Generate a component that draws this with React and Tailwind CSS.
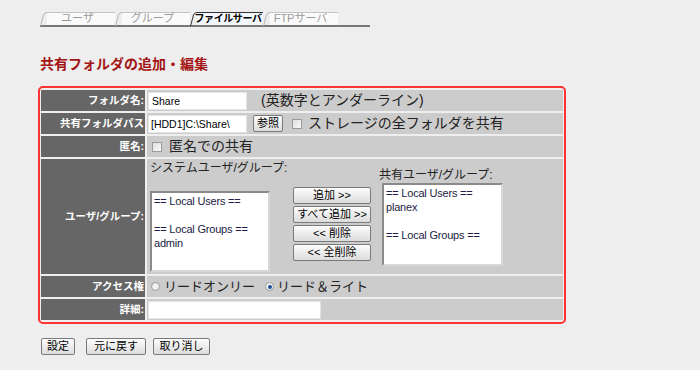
import React from 'react';

const font = "font-['Liberation_Sans','Noto_Sans_CJK_JP',sans-serif]";

function Tab({ label, active }) {
  return (
    <div className={`relative h-[13px] flex items-center justify-center ${active ? 'w-[73px]' : 'w-[75px]'}`}>
      <svg className="absolute left-0 top-0" width="8" height="14" viewBox="0 0 8 14">
        <path d="M0.5 14 L3.5 3 Q4.5 0.5 7 0.5 L8 0.5" fill="none" stroke={active ? '#333' : '#b5b5b5'} strokeWidth="1" />
      </svg>
      <div
        className={`absolute left-[7px] right-0 top-0 bottom-0 border-t ${
          active ? 'border-[#333] bg-[#f4f7fc]' : 'border-[#c4c4c4] bg-[#fafafa]'
        }`}
      ></div>
      <span
        className={`relative leading-none whitespace-nowrap ${
          active ? 'text-[10px] font-bold text-black tracking-[-0.4px] pl-[3px]' : 'text-[11px] text-[#9a9a9a]'
        }`}
      >
        {label}
      </span>
    </div>
  );
}

function Btn({ children, className = '' }) {
  return (
    <button
      type="button"
      className={`h-[17px] border border-[#7a7a7a] rounded-[2px] bg-gradient-to-b from-[#fdfdfd] to-[#dcdcdc] text-[11px] leading-none text-black whitespace-nowrap ${className}`}
    >
      {children}
    </button>
  );
}

function Check() {
  return (
    <span className="inline-block w-[10px] h-[10px] border border-[#9a9a9a] bg-gradient-to-br from-[#dedede] to-[#fafafa] shrink-0"></span>
  );
}

function Radio({ checked }) {
  return (
    <span className="inline-flex items-center justify-center w-[9px] h-[9px] rounded-full border border-[#9a9a9a] bg-[#f0f0f0] shrink-0">
      {checked && <span className="w-[4px] h-[4px] rounded-full bg-[#1f4f9a]"></span>}
    </span>
  );
}

function Label({ children, className = 'h-[21px]' }) {
  return (
    <div className={`bg-[#666] text-white font-bold text-[10.5px] flex items-center justify-end pr-px ${className}`}>
      {children}
    </div>
  );
}

function ListBox({ lines, className }) {
  return (
    <div className={`bg-white border-2 border-t-[#8a8a8a] border-l-[#8a8a8a] border-r-[#d8d8d8] border-b-[#d8d8d8] px-[2px] pt-[1px] text-[11px] tracking-[-0.2px] leading-[14px] text-[#1c1c44] ${className}`}>
      {lines.map((l, i) => (
        <div key={i} className="h-[14px] whitespace-nowrap">{l}</div>
      ))}
    </div>
  );
}

export default function App() {
  return (
    <div className={`w-[700px] h-[370px] bg-[#eeeeee] overflow-hidden ${font}`}>
      {/* tabs */}
      <div className="ml-[40px] pt-[12px] w-[330px] flex border-b-2 border-[#777]">
        <Tab label="ユーザ" />
        <Tab label="グループ" />
        <Tab label="ファイルサーバ" active />
        <Tab label="FTPサーバ" />
      </div>

      <h1 className="ml-[40px] mt-[27px] text-[14px] leading-[20px] font-bold text-[#a31515]">
        共有フォルダの追加・編集
      </h1>

      <div className="ml-[38px] mt-[12px] w-[528px] border-2 border-[#ff3333] rounded-[5px] px-[1px] py-[2px]">
        <div className="grid grid-cols-[104px_416px] gap-[2px] bg-[#eeeeee]">
          <Label>フォルダ名:</Label>
          <div className="bg-[#cccccc] h-[21px] flex items-center pl-px">
            <div className="w-[99px] h-[18px] bg-white border border-[#e4e4e4] text-[10.5px] leading-[16px] pl-[3px] text-black">Share</div>
            <span className="ml-[14px] text-[14px] text-[#222]">(英数字とアンダーライン)</span>
          </div>

          <Label>共有フォルダパス</Label>
          <div className="bg-[#cccccc] h-[21px] flex items-center pl-px">
            <div className="w-[99px] h-[18px] bg-white border border-[#e4e4e4] text-[10.5px] leading-[16px] pl-[2px] text-black whitespace-nowrap overflow-hidden">[HDD1]C:\Share\</div>
            <Btn className="ml-[6px] w-[30px]">参照</Btn>
            <span className="ml-[9px] flex"><Check /></span>
            <span className="ml-[6px] text-[14px] text-[#222]">ストレージの全フォルダを共有</span>
          </div>

          <Label>匿名:</Label>
          <div className="bg-[#cccccc] h-[21px] flex items-center pl-[5px]">
            <Check />
            <span className="ml-[7px] text-[14px] text-[#222]">匿名での共有</span>
          </div>

          <Label className="h-[115px]">ユーザ/グループ:</Label>
          <div className="bg-[#cccccc] h-[115px] flex items-start pl-[3px]">
            <div className="flex flex-col w-[121px]">
              <div className="mt-[2px] text-[12px] leading-[15px] text-[#222] whitespace-nowrap">システムユーザ/グループ:</div>
              <ListBox
                className="mt-[15px] w-[120px] h-[81px]"
                lines={['== Local Users ==', '', '== Local Groups ==', 'admin']}
              />
            </div>
            <div className="ml-[22px] mt-[28px] w-[78px] flex flex-col gap-[2px]">
              <Btn>追加 &gt;&gt;</Btn>
              <Btn>すべて追加 &gt;&gt;</Btn>
              <Btn>&lt;&lt; 削除</Btn>
              <Btn>&lt;&lt; 全削除</Btn>
            </div>
            <div className="ml-[11px] flex flex-col">
              <div className="-ml-[3px] mt-[9px] text-[12px] leading-[15px] text-[#222] whitespace-nowrap">共有ユーザ/グループ:</div>
              <ListBox
                className="w-[121px] h-[83px]"
                lines={['== Local Users ==', 'planex', '', '== Local Groups ==']}
              />
            </div>
          </div>

          <Label>アクセス権</Label>
          <div className="bg-[#cccccc] h-[21px] flex items-center pl-[4px] text-[13px] text-[#222]">
            <Radio />
            <span className="ml-[4px]">リードオンリー</span>
            <span className="ml-[10px] flex"><Radio checked /></span>
            <span className="ml-[3px]">リード＆ライト</span>
          </div>

          <Label>詳細:</Label>
          <div className="bg-[#cccccc] h-[21px] flex items-center pl-px">
            <div className="w-[173px] h-[18px] bg-white border border-[#e4e4e4]"></div>
          </div>
        </div>
      </div>

      <div className="ml-[41px] mt-[14px] flex">
        <Btn className="w-[34px]">設定</Btn>
        <Btn className="ml-[11px] w-[60px]">元に戻す</Btn>
        <Btn className="ml-[7px] w-[57px]">取り消し</Btn>
      </div>
    </div>
  );
}
